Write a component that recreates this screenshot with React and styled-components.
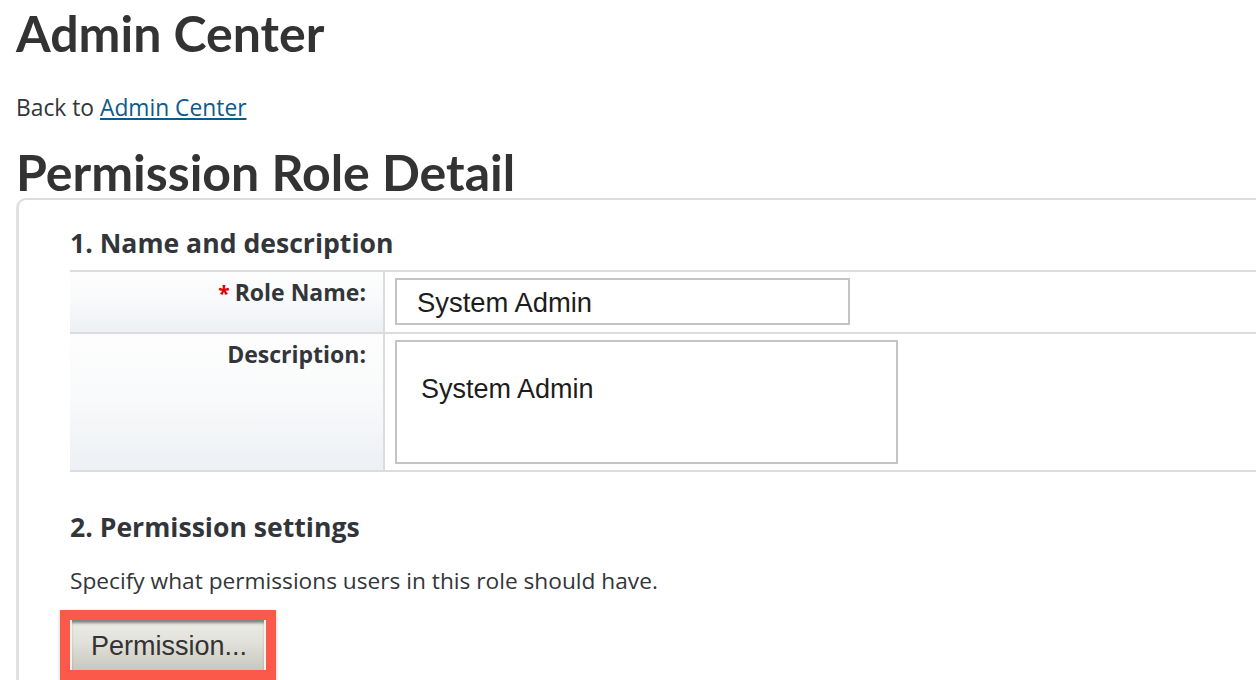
import React from "react";
import styled, { createGlobalStyle } from "styled-components";

const Global = createGlobalStyle`
  html, body { margin: 0; padding: 0; background: #ffffff; }
  body { overflow: hidden; font-family: "Open Sans", "Liberation Sans", sans-serif; color: #32363a; }
  * { box-sizing: border-box; }
`;

const Page = styled.div`
  width: 1256px;
  height: 680px;
  overflow: hidden;
  padding-left: 16px;
  display: flex;
  flex-direction: column;
`;

const Title = styled.h1`
  margin: ${(p) => p.$mt}px 0 0 0;
  font-family: Lato, "Open Sans", sans-serif;
  font-weight: 700;
  font-size: 50px;
  line-height: ${(p) => p.$lh}px;
  color: #333333;
  white-space: nowrap;
`;

const BackLine = styled.div`
  margin-top: 32px;
  font-size: 22.8px;
  line-height: 30px;
  color: #32363a;
  white-space: nowrap;
`;

const Link = styled.a`
  color: #0b5b8d;
  text-decoration: underline;
  text-underline-offset: 2px;
  cursor: pointer;
`;

const Panel = styled.section`
  margin-right: -60px;
  border-top: 2px solid #dcdcdc;
  border-left: 3px solid #e0e0e0;
  border-bottom: 3px solid #d6dee7;
  border-top-left-radius: 10px;
  padding: 26px 0 4px 51px;
  display: flex;
  flex-direction: column;
`;

const SectionTitle = styled.h2`
  margin: ${(p) => p.$mt || 0}px 0 0 0;
  font-size: 26.6px;
  font-weight: 700;
  line-height: 34px;
  color: #32363a;
  white-space: nowrap;
`;

const Table = styled.div`
  margin-top: 10px;
  border-top: 2px solid #dcdcdc;
  display: grid;
  grid-template-columns: 315px 1fr;
`;

const LabelCell = styled.div`
  height: ${(p) => p.$h}px;
  border-bottom: 2px solid #dcdcdc;
  border-right: 2px solid #dcdcdc;
  background: linear-gradient(to bottom, #fdfdfd 0%, #f9fafb 45%, #edf0f4 100%);
  padding: 4px 17px 0 0;
  text-align: right;
  font-size: 23px;
  font-weight: 700;
  line-height: 32px;
  color: #32363a;
  white-space: nowrap;
`;

const Required = styled.span`
  color: #e00000;
  margin-right: 5px;
  font-size: 21px;
`;

const ValueCell = styled.div`
  height: ${(p) => p.$h}px;
  border-bottom: 2px solid #dcdcdc;
  background: #ffffff;
  padding: 6px 0 0 10px;
`;

const TextInput = styled.input`
  display: block;
  width: 455px;
  height: 47px;
  border: 2px solid #c4c4c4;
  border-radius: 0;
  padding: 3px 0 0 20px;
  font-family: "Liberation Sans", Arial, sans-serif;
  font-size: 27.4px;
  color: #1d1d1d;
  background: #ffffff;
  outline: none;
`;

const TextArea = styled.textarea`
  display: block;
  width: 503px;
  height: 124px;
  border: 2px solid #c4c4c4;
  border-radius: 0;
  padding: 32px 0 0 24px;
  font-family: "Liberation Sans", Arial, sans-serif;
  font-size: 27px;
  line-height: 30px;
  color: #1d1d1d;
  background: #ffffff;
  resize: none;
  outline: none;
  overflow: hidden;
`;

const Hint = styled.p`
  margin: 22px 0 0 0;
  font-size: 22.7px;
  line-height: 30px;
  color: #32363a;
  white-space: nowrap;
`;

const Highlight = styled.div`
  align-self: flex-start;
  margin: 14px 0 0 -10px;
  border: 10px solid #fb5a4a;
  box-shadow: 0 1px 3px rgba(0, 0, 0, 0.25);
  display: flex;
`;

const ActionButton = styled.button`
  width: 196px;
  height: 50px;
  margin: 0;
  border: none;
  border-left: 2px solid #f3f3ef;
  border-right: 2px solid #f3f3ef;
  padding: 3px 0 0 19px;
  text-align: left;
  font-family: "Liberation Sans", Arial, sans-serif;
  font-size: 27px;
  color: #333333;
  background: linear-gradient(to bottom, #ecece8 0%, #e3e3dd 40%, #c9c8bd 100%);
  box-shadow: inset 0 4px 3px -1px rgba(40, 40, 40, 0.55);
  cursor: pointer;
  white-space: nowrap;
`;

export default function App() {
  return (
    <>
      <Global />
      <Page>
        <Title $mt={5} $lh={56}>Admin Center</Title>
        <BackLine>
          Back to <Link>Admin Center</Link>
        </BackLine>
        <Title $mt={23} $lh={52}>Permission Role Detail</Title>
        <Panel>
          <SectionTitle>1. Name and description</SectionTitle>
          <Table>
            <LabelCell $h={62}>
              <Required>*</Required>Role Name:
            </LabelCell>
            <ValueCell $h={62}>
              <TextInput readOnly defaultValue="System Admin" />
            </ValueCell>
            <LabelCell $h={138}>Description:</LabelCell>
            <ValueCell $h={138}>
              <TextArea readOnly defaultValue="System Admin" />
            </ValueCell>
          </Table>
          <SectionTitle $mt={38}>2. Permission settings</SectionTitle>
          <Hint>Specify what permissions users in this role should have.</Hint>
          <Highlight>
            <ActionButton>Permission...</ActionButton>
          </Highlight>
        </Panel>
      </Page>
    </>
  );
}
